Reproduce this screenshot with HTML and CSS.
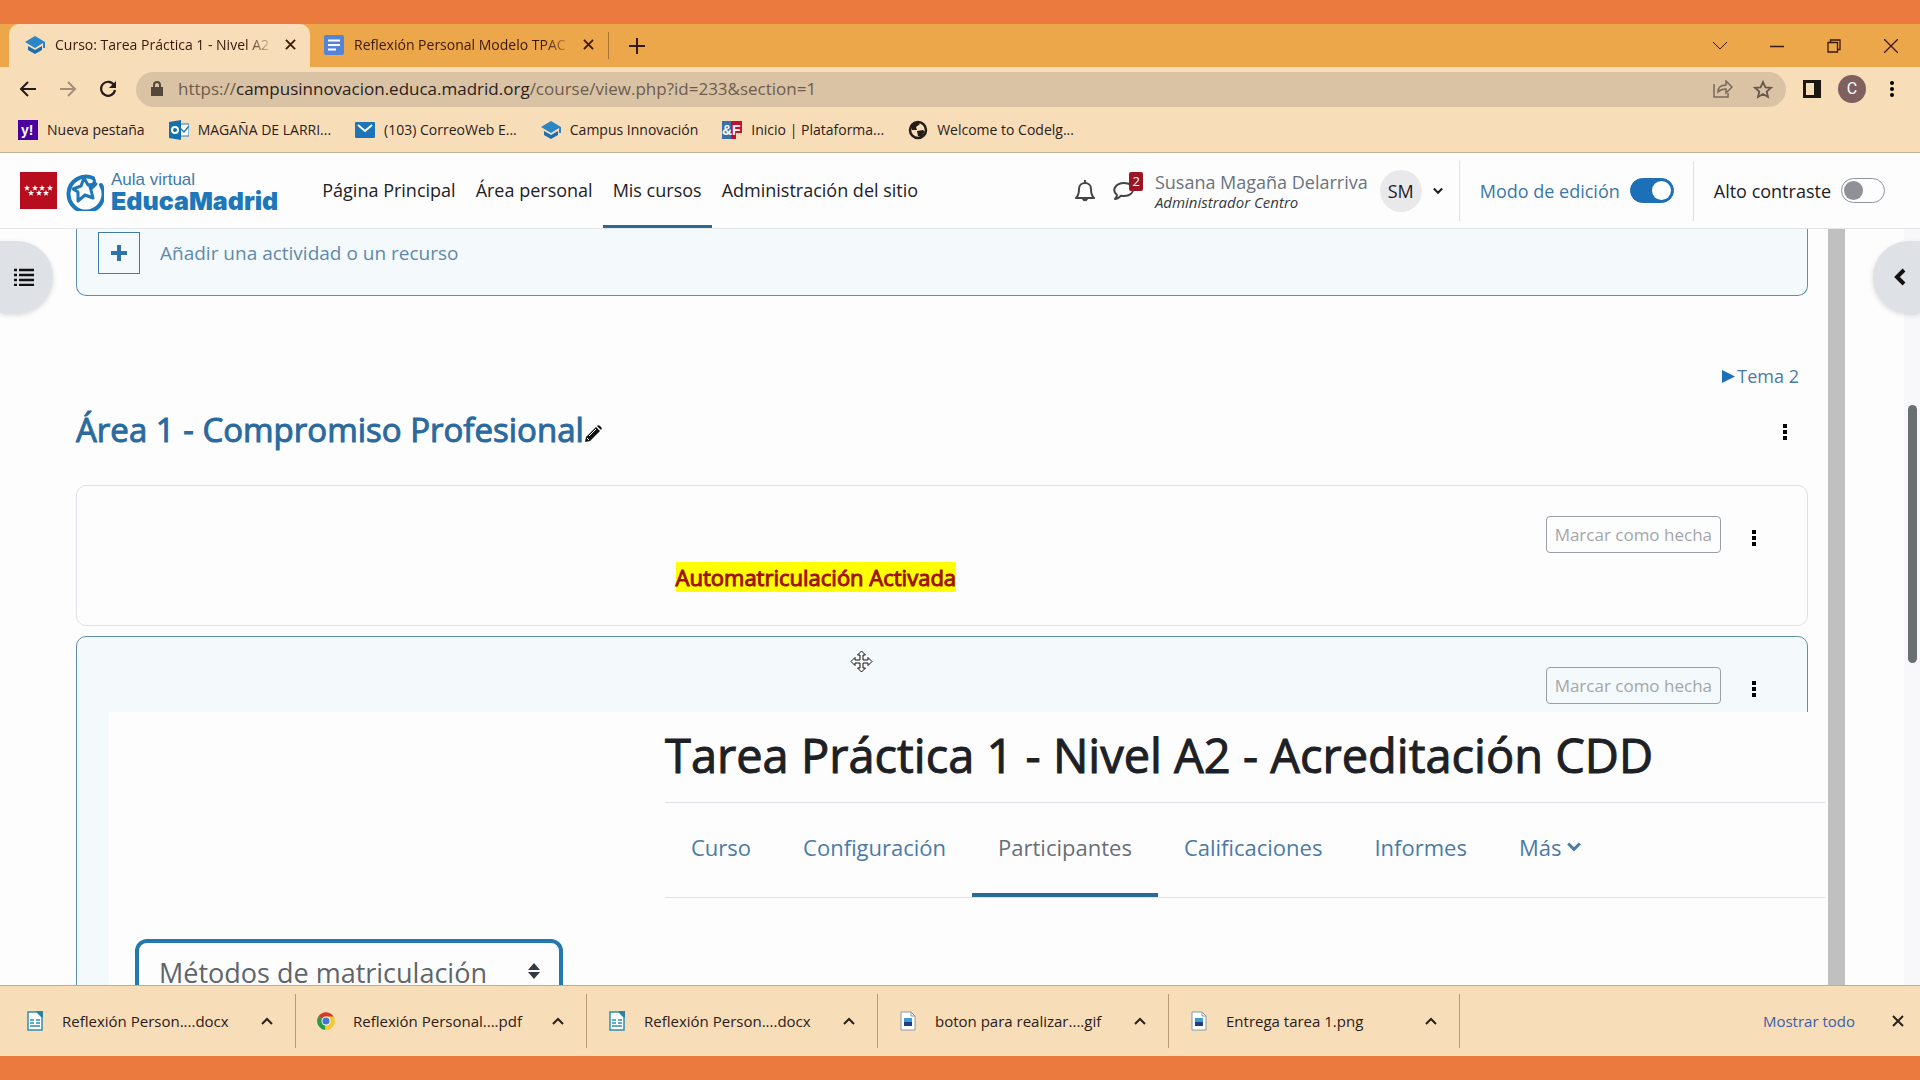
FILE: index.html
```html
<!DOCTYPE html>
<html lang="es">
<head>
    <meta charset="UTF-8">
    <meta name="viewport" content="width=device-width, initial-scale=1.0">
    <title>Curso: Tarea Práctica 1 - Nivel A2</title>
    <link rel="stylesheet" href="styles.css">
</head>
<body>
    <svg class="sprite" aria-hidden="true">
        <symbol id="cap" viewBox="0 0 20 20">
            <path d="M10 1 0 7l10 6 8-5v5h2V7z" fill="#2a86c4"/>
            <path d="M3 11v4l7 4 7-4v-4l-7 4z" fill="#1a6fb0"/>
        </symbol>
        <symbol id="close" viewBox="0 0 12 12">
            <path d="M1 1l10 10M11 1 1 11" stroke="currentColor" stroke-width="2"/>
        </symbol>
        <symbol id="caret-up" viewBox="0 0 12 8">
            <path d="M1 7l5-5 5 5" fill="none" stroke="currentColor" stroke-width="2"/>
        </symbol>
        <symbol id="chevron" viewBox="0 0 12 8">
            <path d="M1 1l5 5 5-5" fill="none" stroke="currentColor" stroke-width="2.500"/>
        </symbol>
        <symbol id="kebab" viewBox="0 0 4 16">
            <path d="M0 0h4v4H0zM0 6h4v4H0zM0 12h4v4H0z"/>
        </symbol>
        <symbol id="doc" viewBox="0 0 16 20">
            <path d="M1 1h9l5 5v13H1z" fill="#fff" stroke="#2f8fae" stroke-width="1.5"/>
            <path d="M9 0h7v7z" fill="#2f7f9e"/>
            <path d="M3 9h4M9 9h4M3 12h4M9 12h4M3 15h10" stroke="#2f8fae" stroke-width="1.5"/>
        </symbol>
        <symbol id="picture" viewBox="0 0 16 20">
            <path d="M1 1h10l4 4v14H1z" fill="#fff" stroke="#8a9aa5"/>
            <path d="M11 1v4h4" fill="none" stroke="#8a9aa5"/>
            <path d="M4 7h8v8H4z" fill="#3f9ad0"/>
            <path d="M4 11h8v4H4z" fill="#1b3f86"/>
        </symbol>
    </svg>

    <div class="window">
        <header class="tabstrip">
            <div class="tab active">
                <svg class="favicon"><use href="#cap"/></svg>
                <span class="tab-title">Curso: Tarea Práctica 1 - Nivel A2</span>
                <button aria-label="Cerrar"><svg width="11" height="11"><use href="#close"/></svg></button>
            </div>
            <div class="tab">
                <svg class="favicon" viewBox="0 0 20 20"><rect width="20" height="20" rx="2" fill="#5583d6"/><path d="M4 5.500h12M4 10h12M4 14.500h8" stroke="#fff" stroke-width="2"/></svg>
                <span class="tab-title">Reflexión Personal Modelo TPAC</span>
                <button aria-label="Cerrar"><svg width="11" height="11"><use href="#close"/></svg></button>
            </div>
            <button class="new-tab" aria-label="Nueva pestaña"><svg width="16" height="16" viewBox="0 0 16 16"><path d="M8 0v16M0 8h16" stroke="currentColor" stroke-width="2"/></svg></button>
            <div class="window-controls">
                <button aria-label="Buscar pestañas"><svg width="14" height="8" viewBox="0 0 14 8"><path d="M0 0l7 7 7-7" fill="none" stroke="currentColor"/></svg></button>
                <button aria-label="Minimizar"><svg width="14" height="14" viewBox="0 0 14 14"><path d="M0 7.500h14" stroke="currentColor" stroke-width="1.500"/></svg></button>
                <button aria-label="Restaurar"><svg width="14" height="14" viewBox="0 0 14 14"><path d="M1 3.500h9.500V13H1zM3.500 3.500V1H13v9.500h-2.500" fill="none" stroke="currentColor" stroke-width="1.300"/></svg></button>
                <button aria-label="Cerrar ventana"><svg width="14" height="14" viewBox="0 0 14 14"><path d="M0 0l14 14M14 0 0 14" stroke="currentColor" stroke-width="1.300"/></svg></button>
            </div>
        </header>

        <div class="toolbar">
            <button aria-label="Atrás"><svg width="18" height="18" viewBox="0 0 18 18"><path d="M17 9H2M9 2 2 9l7 7" fill="none" stroke="currentColor" stroke-width="2"/></svg></button>
            <button class="disabled" aria-label="Adelante"><svg width="18" height="18" viewBox="0 0 18 18"><path d="M1 9h15M9 2l7 7-7 7" fill="none" stroke="currentColor" stroke-width="2"/></svg></button>
            <button aria-label="Recargar"><svg width="18" height="18" viewBox="0 0 18 18"><path d="M15 5a7 7 0 1 0 1 5" fill="none" stroke="currentColor" stroke-width="2.200"/><path d="M17 1v7h-7z" fill="currentColor"/></svg></button>
            <div class="omnibox">
                <svg width="12" height="16" viewBox="0 0 12 16"><path d="M0 6h12v9H0z" fill="#54483c"/><path d="M3 7V4a3 3 0 0 1 6 0v3" fill="none" stroke="#54483c" stroke-width="2"/></svg>
                <div class="url" role="textbox" aria-label="Dirección">https://<span>campusinnovacion.educa.madrid.org</span>/course/view.php?id=233&amp;section=1</div>
                <button aria-label="Compartir"><svg width="20" height="18" viewBox="0 0 20 18"><path d="M1 4v13h14v-4M5 12c0-5 3-7 8-7V1l6 6-6 6V9c-4 0-6 1-8 3z" fill="none" stroke="#786a5b" stroke-width="1.500"/></svg></button>
                <button aria-label="Marcador"><svg width="20" height="19" viewBox="0 0 20 19"><path d="M10 2l2.400 5.300 5.600.5-4.300 3.700 1.300 5.500-5-3-5 3 1.300-5.500L2 7.800l5.600-.5z" fill="none" stroke="#66584b" stroke-width="1.800"/></svg></button>
            </div>
            <button aria-label="Panel lateral"><svg width="18" height="18" viewBox="0 0 18 18"><path d="M1.500 1.500h15v15h-15z" fill="none" stroke="#1c1613" stroke-width="3"/><path d="M11 1h6v16h-6z" fill="#1c1613"/></svg></button>
            <button class="profile" aria-label="Perfil">C</button>
            <button aria-label="Menú"><svg width="4" height="16" viewBox="0 0 4 16"><circle cx="2" cy="2" r="2"/><circle cx="2" cy="8" r="2"/><circle cx="2" cy="14" r="2"/></svg></button>
        </div>

        <nav class="bookmarks">
            <a href="#"><svg viewBox="0 0 20 20"><rect width="20" height="20" fill="#4a00a0"/><text x="3" y="15" class="icon-text">y!</text></svg>Nueva pestaña</a>
            <a href="#"><svg viewBox="0 0 20 20"><path d="M10 4h10v12H10z" fill="#fff" stroke="#2a7cb8"/><path d="M11 8l4 4 5-6" fill="none" stroke="#2a7cb8" stroke-width="1.500"/><path d="M0 2l12-2v20L0 18z" fill="#1471ae"/><circle cx="6" cy="10" r="3" fill="none" stroke="#fff" stroke-width="2"/></svg>MAGAÑA DE LARRI...</a>
            <a href="#"><svg viewBox="0 0 20 20"><rect y="2" width="20" height="16" rx="1" fill="#1d74b8"/><path d="M3 5l7 6 7-6" fill="none" stroke="#fff" stroke-width="2"/></svg>(103) CorreoWeb E...</a>
            <a href="#"><svg><use href="#cap"/></svg>Campus Innovación</a>
            <a href="#"><svg viewBox="0 0 20 20"><path d="M0 1h9v18H0z" fill="#3d6fa8"/><path d="M9 1h11v12h-6v6H9z" fill="#c3102f"/><text x="0" y="15" class="icon-text">&amp;F</text></svg>Inicio | Plataforma...</a>
            <a href="#"><svg viewBox="0 0 20 20"><circle cx="10" cy="10" r="8" fill="#f7ddb9" stroke="#241c18" stroke-width="2.500"/><path d="M3 6l6-4 3 2-4 3 1 3H4zM9 11l6-1 2 2-4 5-3-1z" fill="#241c18"/></svg>Welcome to Codelg...</a>
        </nav>

        <div class="navbar">
            <a class="brand" href="#">
                <svg width="37" height="37" viewBox="0 0 37 37">
                    <defs><path id="star" d="M0-3l.8 2 2.200.1-1.700 1.400.6 2.200L0 1.500l-1.900 1.200.6-2.200L-3-.9-.8-1z"/></defs>
                    <rect width="37" height="37" fill="#b80d1e"/>
                    <g fill="#fff"><use href="#star" x="7" y="16"/><use href="#star" x="15" y="16"/><use href="#star" x="22" y="16"/><use href="#star" x="30" y="16"/><use href="#star" x="11" y="21"/><use href="#star" x="19" y="21"/><use href="#star" x="26" y="21"/></g>
                </svg>
                <svg width="40" height="40" viewBox="0 0 40 40" fill="none" stroke="#1d77b9">
                    <path d="M29 7A17.500 17.500 0 1 0 37 14" stroke-width="4" stroke-linecap="round"/>
                    <path d="M29 7c3 3 1 6-3 9l1 3 2 8-8-3-7 6v-9l-5-3 8-3 3-8 4 7 8-1-5 5" stroke-width="3" stroke-linejoin="round"/>
                </svg>
                <span class="brand-name">Aula virtual<strong>EducaMadrid</strong></span>
            </a>
            <nav class="main-nav">
                <a href="#">Página Principal</a>
                <a href="#">Área personal</a>
                <a href="#" class="current">Mis cursos</a>
                <a href="#">Administración del sitio</a>
            </nav>
            <div class="user">
                <button aria-label="Notificaciones"><svg width="20" height="22" viewBox="0 0 20 22"><path d="M1 18c3-3 3-6 3-9 0-8 12-8 12 0 0 3 0 6 3 9z" fill="none" stroke="#444" stroke-width="2" stroke-linejoin="round"/><path d="M10 0v3" stroke="#444" stroke-width="2"/><path d="M7 19h6c-1 3-5 3-6 0z" fill="#444"/></svg></button>
                <button class="messages" aria-label="Mensajes"><svg width="22" height="20" viewBox="0 0 22 20"><path d="M11 2c12 0 12 13 0 13-1 0-2 0-3-.3C6 17 4 18 2 18c1-1 2-2 2-4-6-5-1-12 7-12z" fill="none" stroke="#444" stroke-width="2" stroke-linejoin="round"/></svg><span class="badge">2</span></button>
                <div class="user-name">Susana Magaña Delarriva<em>Administrador Centro</em></div>
                <button class="user-menu" aria-label="Menú de usuario"><span class="avatar">SM</span><svg width="10" height="8"><use href="#chevron"/></svg></button>
            </div>
            <label class="switch edit">Modo de edición<input type="checkbox" checked></label>
            <label class="switch">Alto contraste<input type="checkbox"></label>
        </div>

        <div class="page">
            <button class="drawer left" aria-label="Índice del curso"><svg width="20" height="18" viewBox="0 0 20 18"><path d="M0 2h3M5 2h15M0 7h3M5 7h15M0 12h3M5 12h15M0 17h3M5 17h15" stroke="#111" stroke-width="2.500"/></svg></button>
            <main>
                <div class="card add">
                    <a href="#"><span class="plus"><svg width="16" height="16" viewBox="0 0 16 16"><path d="M8 0v16M0 8h16" stroke="currentColor" stroke-width="4"/></svg></span>Añadir una actividad o un recurso</a>
                </div>

                <div class="next"><a href="#"><svg width="14" height="13" viewBox="0 0 14 13"><path d="M1 0l13 6.500L1 13z" fill="currentColor"/></svg>Tema 2</a></div>

                <div class="section-title">
                    <h2>Área 1 - Compromiso Profesional</h2>
                    <button class="rename" aria-label="Editar nombre"><svg width="18" height="18" viewBox="0 0 18 18"><path d="M1 17l1-5L12 2l4 4L6 16zM13 1c1-1 2-1 3 0l1 1c1 1 1 2 0 3z" fill="#111"/><path d="M3 13l2 2M5 11l7-7" stroke="#fff"/></svg></button>
                    <button class="more" aria-label="Acciones"><svg width="4" height="16"><use href="#kebab"/></svg></button>
                </div>

                <div class="card activity">
                    <div class="activity-text"><mark>Automatriculación Activada</mark></div>
                    <button class="done">Marcar como hecha</button>
                    <button class="more" aria-label="Acciones"><svg width="4" height="16"><use href="#kebab"/></svg></button>
                </div>

                <div class="card hover">
                    <div class="activity">
                        <div class="activity-text"></div>
                        <button class="done">Marcar como hecha</button>
                        <button class="more" aria-label="Acciones"><svg width="4" height="16"><use href="#kebab"/></svg></button>
                    </div>
                    <div class="embed">
                        <div class="embed-main">
                            <h1>Tarea Práctica 1 - Nivel A2 - Acreditación CDD</h1>
                            <nav class="course-nav">
                                <a href="#">Curso</a>
                                <a href="#">Configuración</a>
                                <a href="#" class="current">Participantes</a>
                                <a href="#">Calificaciones</a>
                                <a href="#">Informes</a>
                                <a href="#">Más <svg width="14" height="10"><use href="#chevron"/></svg></a>
                            </nav>
                        </div>
                        <div class="select">
                            <select aria-label="Navegación de participantes"><option>Métodos de matriculación</option></select>
                            <svg width="12" height="16" viewBox="0 0 12 16"><path d="M0 7l6-7 6 7zM0 9h12l-6 7z" fill="#343a40"/></svg>
                        </div>
                    </div>
                    <!-- cursor over the hovered activity -->
                    <svg class="cursor" width="23" height="23" viewBox="0 0 23 23"><path d="M11.500 1l4 4h-2.500v5h5V7.500l4 4-4 4V13h-5v5h2.500l-4 4-4-4H10v-5H5v2.500l-4-4 4-4V10h5V5H7.500z" fill="#fff" stroke="#111"/></svg>
                </div>
            </main>
            <div class="inner-scroll"></div>
            <aside></aside>
            <div class="scrollbar"><div class="thumb"></div></div>
            <button class="drawer right" aria-label="Abrir bloques"><svg width="12" height="18" viewBox="0 0 12 18"><path d="M10 2L3 9l7 7" fill="none" stroke="#111" stroke-width="4"/></svg></button>
        </div>

        <footer class="downloads">
            <div class="download"><svg class="file"><use href="#doc"/></svg><span>Reflexión Person....docx</span><button aria-label="Opciones"><svg width="12" height="8"><use href="#caret-up"/></svg></button></div>
            <div class="download"><svg class="file" viewBox="0 0 20 20"><path d="M10 10L1.500 5a10 10 0 0 1 17 0z" fill="#d23b2c"/><path d="M10 10L1.500 5A10 10 0 0 0 9 20z" fill="#2c9a47"/><path d="M10 10h0L9 20a10 10 0 0 0 9.500-15H10z" fill="#f5c830"/><circle cx="10" cy="10" r="5" fill="#fff"/><circle cx="10" cy="10" r="4" fill="#4377d0"/></svg><span>Reflexión Personal....pdf</span><button aria-label="Opciones"><svg width="12" height="8"><use href="#caret-up"/></svg></button></div>
            <div class="download"><svg class="file"><use href="#doc"/></svg><span>Reflexión Person....docx</span><button aria-label="Opciones"><svg width="12" height="8"><use href="#caret-up"/></svg></button></div>
            <div class="download"><svg class="file"><use href="#picture"/></svg><span>boton para realizar....gif</span><button aria-label="Opciones"><svg width="12" height="8"><use href="#caret-up"/></svg></button></div>
            <div class="download"><svg class="file"><use href="#picture"/></svg><span>Entrega tarea 1.png</span><button aria-label="Opciones"><svg width="12" height="8"><use href="#caret-up"/></svg></button></div>
            <button class="show-all">Mostrar todo</button>
            <button aria-label="Cerrar"><svg width="12" height="12"><use href="#close"/></svg></button>
        </footer>
    </div>
</body>
</html>
```
FILE: styles.css
```css
* {
    margin: 0;
    padding: 0;
    box-sizing: border-box;
}
body {
    font-family: "Open Sans", "Noto Sans", sans-serif;
    font-size: 18px;
    line-height: 24px;
    color: #1d2125;
    background-color: #eb7a3f;
    height: 100vh;
    padding: 24px 0;
}
a {
    color: inherit;
    text-decoration: none;
}
button {
    font: inherit;
    color: inherit;
    background: none;
    border: none;
    cursor: pointer;
}
svg {
    display: block;
    flex: none;
}
.sprite {
    position: absolute;
    width: 0;
    height: 0;
}
.window {
    height: 100%;
    display: flex;
    flex-direction: column;
    background-color: #fdfdfd;
    overflow: hidden;
}

/* browser frame */
.tabstrip {
    flex: none;
    height: 43px;
    display: flex;
    align-items: center;
    padding: 0 1px 0 9px;
    font-size: 14px;
    color: #38190c;
    background-color: #eda74b;
}
.tab {
    width: 299px;
    height: 100%;
    display: flex;
    align-items: center;
    padding: 0 14px 2px;
    border-right: 1px solid #a8742f;
    border-image: linear-gradient(transparent 20%, #a8742f 20%, #a8742f 80%, transparent 80%) 1;
}
.tab.active {
    width: 301px;
    padding-left: 16px;
    border: none;
    border-radius: 10px 10px 0 0;
    background-color: #f8ddb9;
}
.favicon {
    width: 20px;
    height: 20px;
    margin-right: 10px;
}
.tab-title {
    flex: 1;
    overflow: hidden;
    white-space: nowrap;
    mask-image: linear-gradient(to right, #000 87%, transparent);
}
.tab button {
    margin-left: 10px;
}
.new-tab {
    padding: 20px;
}
.window-controls {
    margin-left: auto;
    display: flex;
}
.window-controls button {
    width: 57px;
    display: flex;
    align-items: center;
    justify-content: center;
}
.toolbar {
    flex: none;
    height: 44px;
    display: flex;
    align-items: center;
    padding: 0 8px;
    color: #241c18;
    background-color: #f8ddb9;
}
.toolbar button {
    width: 40px;
    display: flex;
    justify-content: center;
}
.toolbar .disabled {
    color: #a58f77;
}
.omnibox {
    flex: 1;
    height: 35px;
    margin: 0 6px 0 8px;
    padding: 0 3px 0 15px;
    display: flex;
    align-items: center;
    border-radius: 18px;
    background-color: #dac3a5;
}
.url {
    flex: 1;
    margin-left: 15px;
    font-size: 17px;
    color: #6e5c4c;
}
.url span {
    color: #2b201a;
}
.toolbar .profile {
    width: 28px;
    height: 28px;
    margin: 0 6px;
    align-items: center;
    border-radius: 50%;
    font-family: Roboto, sans-serif;
    font-size: 16px;
    color: #fff;
    background-color: #80605f;
}
.bookmarks {
    flex: none;
    height: 42px;
    display: flex;
    align-items: center;
    gap: 24px;
    padding: 0 0 3px 18px;
    font-size: 14px;
    color: #2b201a;
    background-color: #f8ddb9;
    border-bottom: 1px solid #c8b096;
}
.bookmarks a {
    display: flex;
    align-items: center;
    gap: 9px;
}
.bookmarks svg {
    width: 20px;
    height: 20px;
}
.icon-text {
    font: bold 14px "Liberation Sans", sans-serif;
    fill: #fff;
}

/* site header */
.navbar {
    flex: none;
    height: 76px;
    display: flex;
    align-items: center;
    padding-left: 20px;
    background-color: #fdfdfd;
    border-bottom: 1px solid #e3e6e8;
}
.brand {
    display: flex;
    align-items: center;
    gap: 7px;
    color: #3f7ba8;
}
.brand-name {
    font-family: "Liberation Sans", sans-serif;
    font-size: 17px;
    line-height: 20px;
}
.brand-name strong {
    display: block;
    font-family: Inter, "Liberation Sans", sans-serif;
    font-size: 25px;
    font-weight: 900;
    line-height: 22px;
    color: #1d77b9;
}
.main-nav {
    height: 100%;
    margin-left: 34px;
    display: flex;
}
.main-nav a {
    display: flex;
    align-items: center;
    padding: 2px 10px 0;
    border-bottom: 3px solid transparent;
}
.main-nav .current {
    border-color: #2a6a94;
}
.user {
    margin-left: auto;
    display: flex;
    align-items: center;
    padding-right: 16px;
}
.messages {
    position: relative;
    margin: 0 20px 0 18px;
}
.badge {
    position: absolute;
    top: -9px;
    right: -8px;
    padding: 0 3px;
    border-radius: 2px;
    font-size: 13px;
    line-height: 19px;
    color: #fff;
    background-color: #9c1526;
}
.user-name {
    padding-top: 2px;
    line-height: 20px;
    color: #6a737b;
}
.user-name em {
    display: block;
    font-size: 15px;
    color: #343a40;
}
.user-menu {
    display: flex;
    align-items: center;
    gap: 11px;
    margin-left: 12px;
}
.avatar {
    width: 42px;
    height: 42px;
    border-radius: 50%;
    line-height: 42px;
    background-color: #e9e9ec;
}
.switch {
    height: 60px;
    display: flex;
    align-items: center;
    gap: 10px;
    padding: 0 35px 0 20px;
    border-left: 1px solid #dee2e6;
}
.switch.edit {
    padding-right: 19px;
    color: #3a78a8;
}
.switch input {
    appearance: none;
    width: 44px;
    height: 25px;
    padding: 2px;
    display: flex;
    border: 1px solid #8f959e;
    border-radius: 13px;
}
.switch input::before {
    content: "";
    width: 19px;
    height: 19px;
    border-radius: 50%;
    background-color: #8f9098;
}
.switch input:checked {
    justify-content: flex-end;
    border-color: #1d6fb8;
    background-color: #1d6fb8;
}
.switch input:checked::before {
    background-color: #fff;
}

/* course page */
.page {
    position: relative;
    flex: 1;
    min-height: 0;
    display: flex;
    overflow: hidden;
}
main {
    flex: 1;
    min-width: 0;
    padding: 0 20px 0 76px;
}
.card {
    border: 1px solid #dee2e6;
    border-radius: 10px;
}
.card.add {
    height: 67px;
    padding: 3px 21px;
    border-color: #5e8fae;
    border-top: none;
    border-radius: 0 0 10px 10px;
    background-color: #f4f9fb;
    color: #6089ab;
    font-size: 19px;
}
.add a {
    display: flex;
    align-items: center;
    gap: 20px;
}
.plus {
    width: 42px;
    height: 42px;
    display: flex;
    align-items: center;
    justify-content: center;
    border: 1px solid #3f7ba8;
    color: #2f73a8;
}
.next {
    display: flex;
    justify-content: flex-end;
    margin-top: 68px;
    padding-right: 9px;
    color: #4a7ba6;
}
.next a {
    display: flex;
    align-items: center;
    gap: 2px;
}
.next svg {
    color: #1d6fb8;
}
.section-title {
    display: flex;
    align-items: center;
    margin: 18px 0 31px;
    padding-right: 21px;
}
h2 {
    font-size: 33px;
    font-weight: 400;
    line-height: 48px;
    color: #2a6a9f;
    -webkit-text-stroke: 1px;
}
.rename {
    padding-top: 8px;
}
.section-title .more {
    margin-left: auto;
    padding-top: 4px;
}
.activity {
    display: flex;
    align-items: flex-start;
    padding: 30px 51px 30px 21px;
}
.card.activity {
    height: 141px;
}
.activity-text {
    flex: 1;
    margin-right: 12px;
    padding-top: 46px;
    text-align: center;
    line-height: 31px;
}
mark {
    font-size: 22px;
    color: #a01010;
    background-color: #ff0;
    -webkit-text-stroke: 1px;
}
.done {
    height: 37px;
    padding: 0 8px;
    border: 1px solid #9a9fa5;
    border-radius: 4px;
    font-size: 17px;
    color: #a3a6aa;
}
.activity .more {
    margin: 14px 0 0 31px;
}
.card.hover {
    position: relative;
    margin-top: 10px;
    border-color: #5e8fae;
    background-color: #f4f9fb;
}
.hover .activity {
    padding-bottom: 0;
    height: 75px;
}
.hover .activity-text {
    padding: 0;
}
.cursor {
    position: absolute;
    left: 773px;
    top: 13px;
}
.embed {
    position: relative;
    height: 400px;
    margin: 0 -18px 0 32px;
    background-color: #fdfdfd;
}
.embed-main {
    margin-left: 556px;
}
h1 {
    padding-bottom: 4px;
    font-size: 47px;
    font-weight: 400;
    line-height: 86px;
    white-space: nowrap;
    border-bottom: 1px solid #dee2e6;
    -webkit-text-stroke: 1px;
}
.course-nav {
    display: flex;
    font-size: 22px;
    color: #4a7ba6;
    border-bottom: 1px solid #dee2e6;
}
.course-nav a {
    height: 94px;
    padding: 0 26px 2px;
    display: flex;
    align-items: center;
    gap: 6px;
    border-bottom: 4px solid transparent;
}
.course-nav .current {
    color: #6a6f76;
    border-color: #2a6a94;
}
.select {
    position: relative;
    width: 428px;
    margin: 41px 0 0 26px;
}
.select select {
    appearance: none;
    width: 100%;
    height: 68px;
    padding: 0 20px;
    border: 4px solid #2478b0;
    border-radius: 12px;
    font: inherit;
    font-size: 27px;
    color: #5f656b;
    background-color: #fdfdfd;
}
.select svg {
    position: absolute;
    right: 23px;
    top: 24px;
}
.inner-scroll {
    flex: none;
    width: 17px;
    background-color: #c0c0c0;
}
aside {
    flex: none;
    width: 59px;
}
.scrollbar {
    flex: none;
    width: 16px;
    padding: 176px 3px 0 4px;
    background-color: #f8f8fa;
}
.thumb {
    height: 258px;
    border-radius: 5px;
    background-color: #687072;
}
.drawer {
    position: absolute;
    top: 12px;
    height: 72px;
    display: flex;
    align-items: center;
    background-color: #dee2e6;
    box-shadow: 0 2px 5px rgba(0, 0, 0, 0.15);
}
.drawer.left {
    left: 0;
    padding: 0 19px 0 14px;
    border-radius: 0 36px 36px 0;
}
.drawer.right {
    right: 0;
    padding: 0 14px 0 21px;
    border-radius: 36px 0 0 36px;
}

/* downloads shelf */
.downloads {
    flex: none;
    height: 71px;
    display: flex;
    align-items: center;
    padding: 0 16px 0 5px;
    font-size: 15px;
    color: #2b201a;
    background-color: #f8ddb9;
    border-top: 1px solid #c8a890;
}
.download {
    width: 291px;
    height: 54px;
    display: flex;
    align-items: center;
    padding: 0 22px 0 21px;
    border-right: 1px solid #b89a78;
}
.file {
    width: 18px;
    height: 20px;
    margin: 0;
}
.download span {
    flex: 1;
    margin-left: 18px;
}
.show-all {
    margin: 0 37px 0 auto;
    color: #3b5fa5;
}
```
